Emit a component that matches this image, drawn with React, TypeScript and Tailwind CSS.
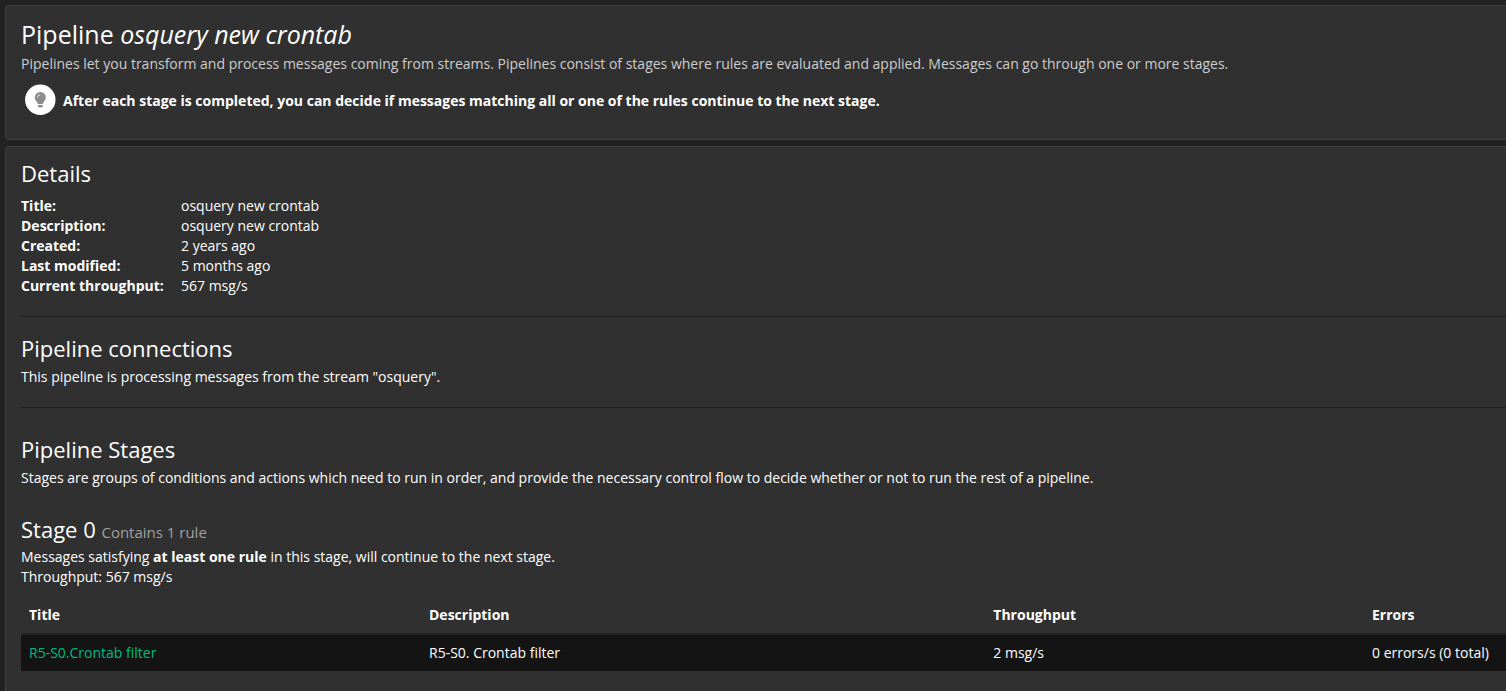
const rules = [
  { title: "R5-S0.Crontab filter", description: "R5-S0. Crontab filter", throughput: "2 msg/s", errors: "0 errors/s (0 total)" },
];

const details = [
  ["Title:", "osquery new crontab"],
  ["Description:", "osquery new crontab"],
  ["Created:", "2 years ago"],
  ["Last modified:", "5 months ago"],
  ["Current throughput:", "567 msg/s"],
];

function TipIcon() {
  return (
    <svg viewBox="0 0 32 32" className="size-8 shrink-0" aria-hidden="true">
      <circle cx="16.300" cy="15.700" r="15.200" fill="#fff" />
      <path
        fill="#8c8c8c"
        d="M16.300 8a5.500 5.500 0 0 0-5.500 5.500c0 1.400.5 2.600 1.400 3.600.6.700 1.400 2 1.700 2.900h4.800c.3-.9 1.100-2.200 1.700-2.900a5.500 5.500 0 0 0 1.400-3.600A5.500 5.500 0 0 0 16.300 8Zm-2.400 12.900v1c0 .2.100.4.200.5l.6.800c.1.200.4.400.6.400h2c.2 0 .5-.2.600-.4l.6-.8c.1-.1.200-.3.200-.5v-1Z"
      />
      <path d="M13.500 13.500a2.800 2.800 0 0 1 2.800-2.800" stroke="#fff" strokeWidth=".8" fill="none" />
    </svg>
  );
}

export default function App() {
  return (
    <main className="flex min-h-screen flex-col gap-1.5 overflow-hidden bg-[#222] pt-[5px] pl-[5px] font-['Open_Sans',sans-serif] text-sm leading-5 text-white">
      <header className="rounded-l-sm border border-r-0 border-[#3e3e3e] bg-[#303030] px-[15px] pt-3.5 pb-[23px]">
        <h1 className="text-[25px] leading-7">
          Pipeline <em>osquery new crontab</em>
        </h1>
        <p className="mt-1.5 text-[#cdcdcd]">
          Pipelines let you transform and process messages coming from streams. Pipelines consist of stages where rules are evaluated and applied. Messages can go through one or more stages.
        </p>
        <div className="mt-2.5 flex items-end gap-[7px] pl-[3px] font-bold">
          <TipIcon />
          <p className="pb-[5px]">After each stage is completed, you can decide if messages matching all or one of the rules continue to the next stage.</p>
        </div>
      </header>

      <div className="grow rounded-tl-sm border-t border-l border-[#3e3e3e] bg-[#303030] pt-[15px] pl-[15px]">
        <section>
          <h2 className="text-[22px] leading-[22px]">Details</h2>
          <dl className="mt-3 grid grid-cols-[160px_1fr]">
            {details.map(([label, value]) => (
              <div key={label} className="contents">
                <dt className="font-bold">{label}</dt>
                <dd>{value}</dd>
              </div>
            ))}
          </dl>
        </section>
        <hr className="my-5 border-[#1f1f1f]" />
        <section>
          <h2 className="text-[22px] leading-[22px]">Pipeline connections</h2>
          <p className="mt-2">This pipeline is processing messages from the stream "osquery".</p>
        </section>
        <hr className="mt-5 mb-[30px] border-[#1f1f1f]" />
        <section>
          <h2 className="text-[22px] leading-[22px]">Pipeline Stages</h2>
          <p className="mt-2">
            Stages are groups of conditions and actions which need to run in order, and provide the necessary control flow to decide whether or not to run the rest of a pipeline.
          </p>
        </section>
        <section className="mt-[30px]">
          <h2 className="text-[22px] leading-[22px]">
            Stage 0 <small className="text-[15px] text-[#a0a0a0]">Contains 1 rule</small>
          </h2>
          <p className="mt-1">
            Messages satisfying <strong>at least one rule</strong> in this stage, will continue to the next stage.
          </p>
          <p>Throughput: 567 msg/s</p>
          <table className="mt-2.5 w-full table-fixed text-left">
            <colgroup>
              <col className="w-[400px]" />
              <col className="w-[38%]" />
              <col />
              <col className="w-[142px]" />
            </colgroup>
            <thead>
              <tr className="border-b-2 border-[#252525]">
                <th className="p-2">Title</th>
                <th className="p-2">Description</th>
                <th className="p-2">Throughput</th>
                <th className="p-2">Errors</th>
              </tr>
            </thead>
            <tbody>
              {rules.map((rule) => (
                <tr key={rule.title} className="bg-[#141414]">
                  <td className="p-2"><a href="#rule" className="text-[#00bc81]">{rule.title}</a></td>
                  <td className="p-2">{rule.description}</td>
                  <td className="p-2">{rule.throughput}</td>
                  <td className="p-2">{rule.errors}</td>
                </tr>
              ))}
            </tbody>
          </table>
        </section>
      </div>
    </main>
  );
}
